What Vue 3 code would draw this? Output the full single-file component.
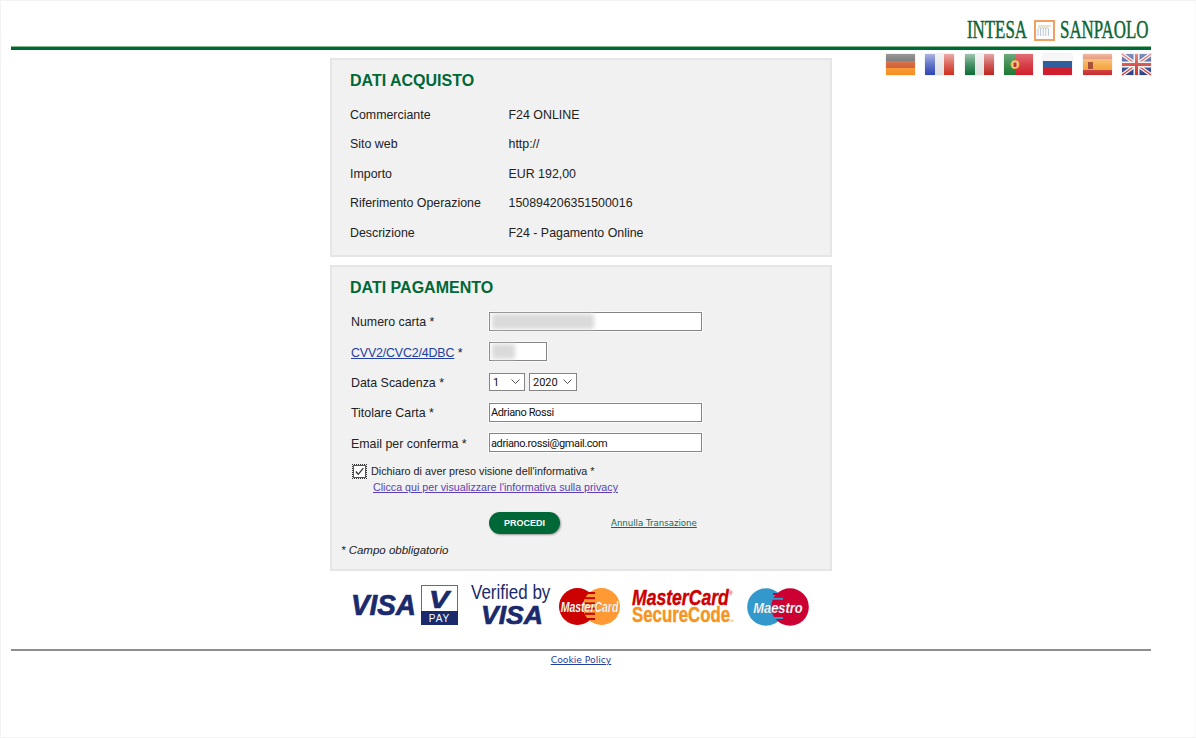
<script setup>
import { ref } from "vue";

const purchase = [
  ["Commerciante", "F24 ONLINE"],
  ["Sito web", "http://"],
  ["Importo", "EUR 192,00"],
  ["Riferimento Operazione", "150894206351500016"],
  ["Descrizione", "F24 - Pagamento Online"],
];

const months = Array.from({ length: 12 }, (_, i) => i + 1);
const years = [2020, 2021, 2022, 2023, 2024, 2025];

const month = ref(1);
const year = ref(2020);
const holder = ref("Adriano Rossi");
const email = ref("adriano.rossi@gmail.com");

const stripes = [0, 1, 2, 3, 4, 5];
</script>

<template>
  <div class="page">
    <header class="top">
      <svg class="logo" width="184" height="24" viewBox="0 0 184 24">
        <text transform="translate(1 19) scale(.675 1)" class="logo-text">INTESA</text>
        <rect x="69" y="2" width="19" height="19" fill="#fff" stroke="#f0a060" stroke-width="2" />
        <path d="M72 17v-7c1.300-2 2.600-2 2.600 0v7M74.600 10c1.300-2 2.600-2 2.600 0v7M77.200 10c1.300-2 2.600-2 2.600 0v7M79.800 10c1.300-2 2.600-2 2.600 0v7" fill="none" stroke="#a8b8c8" stroke-width="0.800" />
        <path d="M72 7h13" stroke="#d8c890" stroke-width="1" />
        <text transform="translate(94 19) scale(.675 1)" class="logo-text">SANPAOLO</text>
      </svg>
    </header>
    <div class="green-bar"></div>

    <div class="layout">
      <div></div>
      <main>
        <section class="card purchase">
          <h2>DATI ACQUISTO</h2>
          <div v-for="row in purchase" :key="row[0]" class="info-row">
            <span class="info-label">{{ row[0] }}</span>
            <span>{{ row[1] }}</span>
          </div>
        </section>

        <section class="card payment">
          <h2>DATI PAGAMENTO</h2>
          <form @submit.prevent>
            <div class="form-row">
              <label>Numero carta *</label>
              <div class="masked wide"><input type="text" readonly /><span class="smudge smudge-long"></span></div>
            </div>
            <div class="form-row">
              <label><a href="#" class="cvv">CVV2/CVC2/4DBC</a> *</label>
              <div class="masked short"><input type="text" readonly /><span class="smudge smudge-short"></span></div>
            </div>
            <div class="form-row">
              <label>Data Scadenza *</label>
              <div class="selects">
                <div class="sel-wrap sel-month">
                  <select v-model="month">
                    <option v-for="m in months" :key="m" :value="m">{{ m }}</option>
                  </select>
                  <svg class="chevron" width="9" height="5" viewBox="0 0 9 5"><path d="M.5.500 4.500 4.500 8.500.500" fill="none" stroke="#555" /></svg>
                </div>
                <div class="sel-wrap sel-year">
                  <select v-model="year">
                    <option v-for="y in years" :key="y" :value="y">{{ y }}</option>
                  </select>
                  <svg class="chevron" width="9" height="5" viewBox="0 0 9 5"><path d="M.5.500 4.500 4.500 8.500.500" fill="none" stroke="#555" /></svg>
                </div>
              </div>
            </div>
            <div class="form-row">
              <label>Titolare Carta *</label>
              <input v-model="holder" type="text" class="text-input" />
            </div>
            <div class="form-row">
              <label>Email per conferma *</label>
              <input v-model="email" type="text" class="text-input" />
            </div>

            <div class="consent">
              <span class="check">
                <svg width="13" height="13" viewBox="0 0 13 13">
                  <rect x="0.500" y="0.500" width="12" height="12" fill="#fff" stroke="#555" />
                  <path d="M2.800 6.500 5.300 9.300 10.300 3.200" fill="none" stroke="#333" stroke-width="1.300" />
                </svg>
              </span>
              <div>
                <div class="consent-line">Dichiaro di aver preso visione dell'informativa *</div>
                <a href="#" class="privacy">Clicca qui per visualizzare l'informativa sulla privacy</a>
              </div>
            </div>

            <div class="actions">
              <button type="submit">PROCEDI</button>
              <a href="#" class="cancel">Annulla Transazione</a>
            </div>
            <p class="note">* Campo obbligatorio</p>
          </form>
        </section>

        <div class="brands">
          <svg width="107" height="40" viewBox="0 0 107 40">
            <text transform="translate(0 30) scale(.96 1)" class="visa" font-size="29">VISA</text>
            <rect x="70.500" y="0.500" width="36" height="39" fill="#fff" stroke="#5a6a9c" />
            <rect x="70" y="26" width="37" height="14" fill="#1a2a6c" />
            <text transform="translate(88 23) scale(1.250 1)" class="visa" font-size="24" text-anchor="middle">V</text>
            <text x="88.500" y="37" class="pay">PAY</text>
          </svg>
          <svg class="verified-logo" width="80" height="40" viewBox="0 0 80 40">
            <text transform="translate(0 14) scale(.81 1)" class="verified">Verified by</text>
            <text x="10" y="39" class="visa" font-size="26.500">VISA</text>
          </svg>
          <svg class="mc-logo" width="61" height="37" viewBox="0 0 61 37">
            <circle cx="18.500" cy="18.500" r="18.500" fill="#cc0000" />
            <circle cx="42.500" cy="18.500" r="18.500" fill="#ff9933" />
            <rect v-for="s in stripes" :key="s" x="26" :y="4 + s * 5.200" width="10" height="2" fill="#cc0000" />
            <text transform="translate(30.500 23.500) scale(.75 1)" class="mc-name">MasterCard</text>
          </svg>
          <svg class="sc-logo" width="102" height="37" viewBox="0 0 102 37">
            <text transform="translate(0 18) scale(.8 1)" class="sc-top">MasterCard</text>
            <text x="97" y="8" class="sc-reg">®</text>
            <text transform="translate(0 35) scale(.765 1)" class="sc-bottom">SecureCode</text>
            <text x="97" y="36" class="sc-tm">™</text>
          </svg>
          <svg class="maestro-logo" width="62" height="38" viewBox="0 0 62 38">
            <circle cx="19" cy="19" r="18.800" fill="#3399cc" />
            <circle cx="43" cy="19" r="18.800" fill="#cc0033" />
            <rect v-for="s in stripes" :key="s" x="26" :y="5 + s * 4.800" width="10" height="2" :fill="s % 2 ? '#3399cc' : '#cc0033'" />
            <text transform="translate(31 25) scale(.83 1)" class="mc-name maestro">Maestro</text>
          </svg>
        </div>
      </main>

      <nav class="flags">
        <svg class="flag" width="29" height="21" viewBox="0 0 29 21">
          <defs>
            <linearGradient id="gloss" x1="0" y1="0" x2="0" y2="1">
              <stop offset="0" stop-color="#fff" stop-opacity="0.600" />
              <stop offset="0.500" stop-color="#fff" stop-opacity="0.250" />
              <stop offset="1" stop-color="#fff" stop-opacity="0" />
            </linearGradient>
          </defs>
          <rect width="29" height="7" fill="#5c5c5c" />
          <rect y="7" width="29" height="7" fill="#cf4f20" />
          <rect y="14" width="29" height="7" fill="#f78f22" />
          <rect width="29" height="21" fill="url(#gloss)" opacity="0.600" />
        </svg>
        <svg class="flag" width="29" height="21" viewBox="0 0 29 21">
          <rect width="10" height="21" fill="#2f45b5" />
          <rect x="10" width="9" height="21" fill="#e0e0e0" />
          <rect x="19" width="10" height="21" fill="#cf3020" />
          <rect width="29" height="21" fill="url(#gloss)" />
        </svg>
        <svg class="flag" width="29" height="21" viewBox="0 0 29 21">
          <rect width="10" height="21" fill="#0b6d33" />
          <rect x="10" width="9" height="21" fill="#e0e0e0" />
          <rect x="19" width="10" height="21" fill="#bd2420" />
          <rect width="29" height="21" fill="url(#gloss)" />
        </svg>
        <svg class="flag" width="29" height="21" viewBox="0 0 29 21">
          <rect width="11" height="21" fill="#1c7a34" />
          <rect x="11" width="18" height="21" fill="#d11f2b" />
          <rect width="29" height="21" fill="url(#gloss)" opacity="0.600" />
          <circle cx="11" cy="10.500" r="4.500" fill="#e7b63c" />
          <rect x="9" y="8" width="4" height="5.500" fill="#c8322a" stroke="#fff" stroke-width="0.700" />
        </svg>
        <svg class="flag" width="29" height="21" viewBox="0 0 29 21">
          <rect width="29" height="7" fill="#f6f6f6" />
          <rect y="7" width="29" height="7" fill="#2e5e9e" />
          <rect y="14" width="29" height="7" fill="#cf1f2e" />
        </svg>
        <svg class="flag" width="29" height="21" viewBox="0 0 29 21">
          <rect width="29" height="5" fill="#d8501f" />
          <rect y="5" width="29" height="11" fill="#f2981e" />
          <rect y="16" width="29" height="5" fill="#c92c2c" />
          <rect width="29" height="21" fill="url(#gloss)" />
          <rect x="5" y="8" width="5" height="7" fill="#a8503a" />
        </svg>
        <svg class="flag" width="29" height="21" viewBox="0 0 29 21">
          <rect width="29" height="21" fill="#2b3f8c" />
          <path d="M0 0 29 21M29 0 0 21" stroke="#f3f3f3" stroke-width="4" />
          <path d="M0 0 29 21M29 0 0 21" stroke="#d0342c" stroke-width="1.300" />
          <path d="M14.500 0v21M0 10.500h29" stroke="#f3f3f3" stroke-width="6" />
          <path d="M14.500 0v21M0 10.500h29" stroke="#d0342c" stroke-width="3" />
          <rect width="29" height="21" fill="url(#gloss)" opacity="0.700" />
        </svg>
      </nav>
    </div>

    <footer>
      <a href="#" class="cookie">Cookie Policy</a>
    </footer>
  </div>
</template>

<style>
html, body {
  margin: 0;
  background: #fff;
}
</style>

<style scoped>
.page {
  box-sizing: border-box;
  height: 738px;
  padding: 0 44px 0 10px;
  border: 1px solid #f3f3f3;
  border-right-color: #fafafa;
  overflow: hidden;
  font-family: "Liberation Sans", Arial, sans-serif;
  font-size: 12.400px;
  color: #222;
}

svg {
  overflow: visible;
}

.top {
  display: flex;
  justify-content: flex-end;
  height: 45px;
}
.logo {
  margin-top: 18px;
  margin-right: 1px;
}
.logo-text {
  font-family: "Liberation Serif", serif;
  font-size: 25px;
  fill: #0d6636;
  stroke: #0d6636;
  stroke-width: 0.500;
}

.green-bar {
  height: 3px;
  background: #006837;
  border-top: 1px solid #86b88f;
}

.layout {
  display: grid;
  grid-template-columns: 319px 502px 1fr;
  align-items: start;
}

.flags {
  display: flex;
  justify-content: space-between;
  margin: 4px 0 0 54px;
}
.flag {
  border-radius: 2px;
  box-shadow: 0 0 1px #888;
}

main {
  padding-top: 8px;
}

.card {
  box-sizing: border-box;
  background: #f1f1f1;
  border: 2px solid #e5e5e5;
  padding: 11px 18px 0;
}
.purchase {
  height: 199px;
  margin-bottom: 8px;
}
.payment {
  height: 306px;
  padding-left: 8px;
}

h2 {
  margin: 0 0 8px;
  height: 20px;
  line-height: 20px;
  font-size: 16px;
  font-weight: bold;
  color: #006837;
}
.purchase h2 {
  margin-bottom: 9px;
}
.payment h2 {
  margin-left: 10px;
}

.info-row {
  display: flex;
  align-items: center;
  height: 29.500px;
}
.info-label {
  width: 158.500px;
}

.form-row {
  display: flex;
  align-items: center;
  height: 30.400px;
  padding-left: 11px;
}
.form-row label {
  width: 138px;
  margin-top: 2px;
}
.cvv {
  color: #23409f;
  letter-spacing: -0.150px;
}

.text-input,
.masked input {
  box-sizing: border-box;
  display: block;
  height: 19px;
  padding: 1px 1px 0;
  border: 1px solid #858585;
  background: #fff;
  box-shadow: 0 0 0 1px #fbfbfb;
  font-family: Roboto, sans-serif;
  font-size: 11px;
  letter-spacing: -0.400px;
  color: #111;
  outline: none;
}
.text-input {
  width: 213px;
}
.masked {
  position: relative;
}
.masked input {
  width: 100%;
}
.wide {
  width: 213px;
}
.short {
  width: 58px;
}
.smudge {
  position: absolute;
  top: 2px;
  left: 3px;
  height: 15px;
  background: #dadada;
  filter: blur(2px);
}
.smudge-long {
  width: 102px;
}
.smudge-short {
  width: 23px;
}

.selects {
  display: flex;
  gap: 4px;
}
.sel-wrap {
  position: relative;
  height: 18px;
}
.sel-month {
  width: 36px;
}
.sel-year {
  width: 48px;
}
select {
  appearance: none;
  box-sizing: border-box;
  display: block;
  width: 100%;
  height: 18px;
  padding: 1px 0 0 3px;
  border: 1px solid #858585;
  border-radius: 0;
  background: #fff;
  font-family: Roboto, sans-serif;
  font-size: 11px;
  color: #111;
}
.chevron {
  position: absolute;
  top: 6px;
  right: 5px;
  pointer-events: none;
}

.consent {
  display: flex;
  gap: 5px;
  margin: 5px 0 0 13px;
}
.check {
  display: block;
  width: 13px;
  height: 13px;
  margin-top: 2px;
  outline: 1px dotted #333;
}
.consent-line {
  height: 16px;
  line-height: 16px;
  font-size: 10.800px;
  color: #222;
}
.privacy {
  display: block;
  height: 16px;
  line-height: 16px;
  margin-left: 2px;
  font-size: 10.700px;
  color: #5b3fb5;
}

.actions {
  display: flex;
  align-items: center;
  margin: 17px 0 0 149px;
}
button {
  width: 71px;
  height: 22px;
  padding: 0;
  border: 0;
  border-radius: 11px;
  background: #006837;
  box-shadow: 1px 1px 2px #999;
  color: #fff;
  font-family: "Liberation Sans", Arial, sans-serif;
  font-size: 9px;
  font-weight: bold;
}
.cancel {
  margin: 1px 0 0 51px;
  font-family: "DejaVu Sans", sans-serif;
  font-size: 8.600px;
  color: #0a6d5a;
}

.note {
  margin: 8px 0 0 1px;
  height: 16px;
  line-height: 16px;
  font-size: 11.500px;
  font-style: italic;
}

.brands {
  display: flex;
  align-items: flex-start;
  margin-top: 14px;
  padding-left: 21px;
  height: 64px;
}
.verified-logo {
  margin-left: 13px;
}
.mc-logo {
  margin: 3px 0 0 8px;
}
.sc-logo {
  margin: 2px 0 0 12px;
}
.maestro-logo {
  margin: 3px 0 0 13px;
}

.visa {
  font-family: "Liberation Sans", Arial, sans-serif;
  font-style: italic;
  font-weight: bold;
  fill: #1a2a6c;
  stroke: #1a2a6c;
  stroke-width: 0.700;
}
.pay {
  font-family: "Liberation Sans", Arial, sans-serif;
  font-size: 10px;
  letter-spacing: 1px;
  fill: #fff;
  text-anchor: middle;
}
.verified {
  font-family: "Liberation Sans", Arial, sans-serif;
  font-size: 21px;
  fill: #1a2a6c;
}
.mc-name {
  font-family: "Liberation Sans", Arial, sans-serif;
  font-size: 14px;
  font-style: italic;
  font-weight: bold;
  fill: #fff;
  text-anchor: middle;
  stroke: #777;
  stroke-width: 0.200;
}
.maestro {
  font-size: 15.500px;
}
.sc-top {
  font-family: "Liberation Sans", Arial, sans-serif;
  font-size: 22px;
  font-style: italic;
  font-weight: bold;
  fill: #cc0000;
  stroke: #cc0000;
  stroke-width: 0.400;
}
.sc-bottom {
  font-family: "Liberation Sans", Arial, sans-serif;
  font-size: 22px;
  font-weight: bold;
  fill: #f7941e;
  stroke: #f7941e;
  stroke-width: 0.400;
}
.sc-reg {
  font-family: "Liberation Sans", Arial, sans-serif;
  font-size: 5px;
  fill: #cc0000;
}
.sc-tm {
  font-family: "Liberation Sans", Arial, sans-serif;
  font-size: 5px;
  fill: #f7941e;
}

footer {
  border-top: 2px solid #8e8e8e;
  text-align: center;
  padding-top: 1px;
  line-height: 14px;
}
.cookie {
  font-family: "DejaVu Sans", sans-serif;
  font-size: 9.200px;
  color: #23409f;
}
</style>
